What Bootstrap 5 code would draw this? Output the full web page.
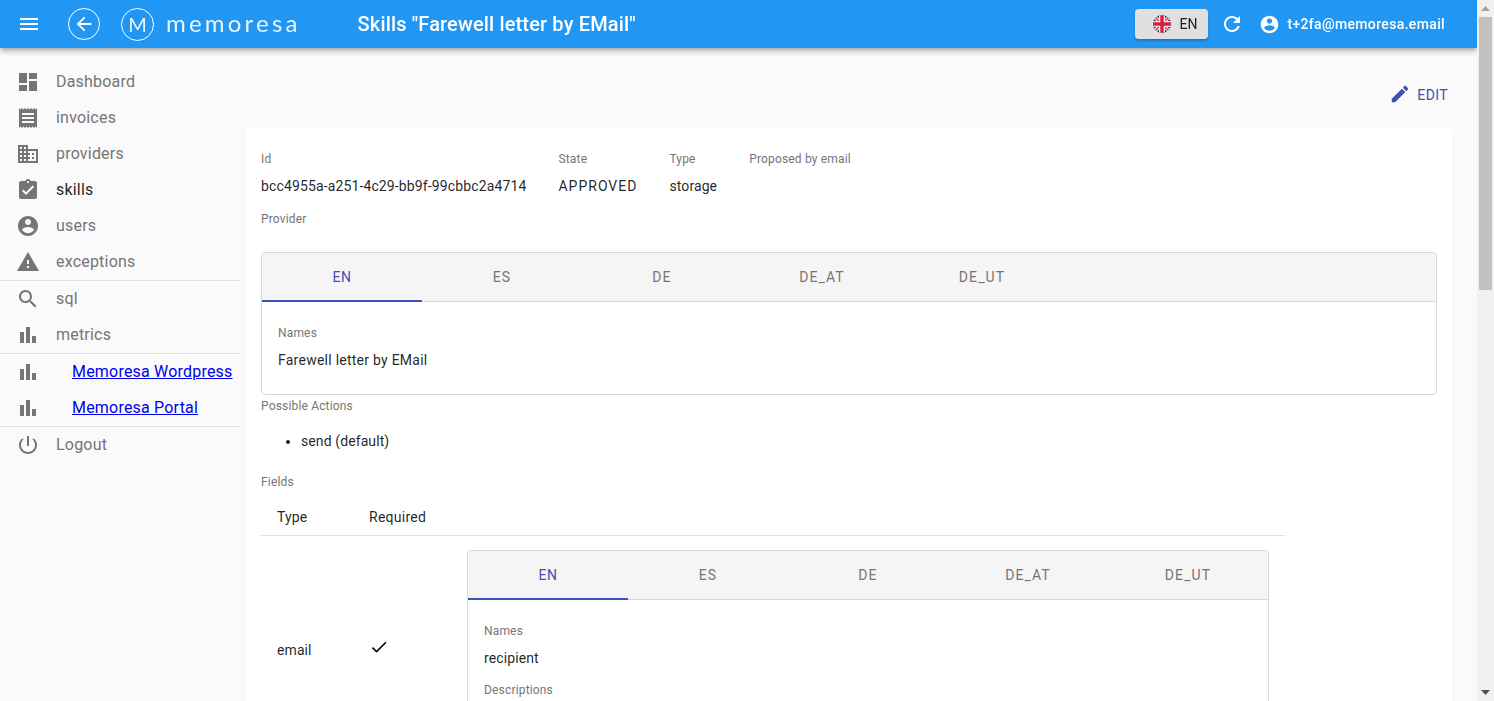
<!DOCTYPE html>
<html lang="en">
<head>
  <meta charset="UTF-8" />
  <meta name="viewport" content="width=device-width, initial-scale=1.0"/>
  <title>Memoresa Admin</title>
  <link href="https://cdn.jsdelivr.net/npm/bootstrap@5.3.0/dist/css/bootstrap.min.css" rel="stylesheet">
  <style>
    html, body { height: 100%; overflow: hidden; }
    body { background: #fafafa; font-family: Roboto, "Liberation Sans", sans-serif; font-size: 14px; color: rgba(0,0,0,.87); line-height: 20px; letter-spacing: .1px; }
    .ico { width: 24px; height: 24px; fill: currentColor; flex: none; }

    .app-pane { overflow-y: auto; scrollbar-width: none; height: 100%; }
    .fake-bar { width: 17px; height: 100%; background: #f1f1f1; flex: none; }
    .fake-bar .arrow { height: 17px; flex: none; }
    .fake-bar .slot { padding: 0 2px; }
    .fake-bar .thumb { height: 273px; background: #c1c1c1; }

    .top-bar { height: 48px; background: #2196f3; color: #fff; box-shadow: 0 2px 4px -1px rgba(0,0,0,.2), 0 4px 5px 0 rgba(0,0,0,.14), 0 1px 10px 0 rgba(0,0,0,.12); z-index: 10; padding: 0 16px; }
    .burger { margin-left: 1px; }
    .ring { border: 1.3px solid #fff; border-radius: 50%; flex: none; }
    .back-ring { width: 32px; height: 32px; margin-left: 27px; }
    .back-ring .ico { width: 22px; height: 22px; }
    .logo-ring { width: 33px; height: 33px; margin-left: 21px; font-family: Lato, sans-serif; font-weight: 400; font-size: 20px; line-height: 1; letter-spacing: 0; color: rgba(255,255,255,.9); }
    .logo-word { margin-left: 12px; font-family: Lato, sans-serif; font-weight: 400; font-size: 24px; letter-spacing: 3.2px; line-height: 1; margin-top: -3px; color: rgba(255,255,255,.9); }
    .page-title { margin: 0 0 0 57px; font-size: 20px; font-weight: 500; line-height: 28px; letter-spacing: .15px; }
    .lang-btn { width: 73px; height: 30px; background: #e0e0e0; border-radius: 4px; color: rgba(0,0,0,.87); box-shadow: 0 2px 2px rgba(0,0,0,.2); padding-left: 18px; gap: 8px; font-size: 14px; }
    .refresh { margin-left: 12px; }
    .user-ico { margin-left: 15px; width: 21px; height: 21px; }
    .user-mail { margin-left: 7px; margin-right: 16px; font-size: 14px; font-weight: 500; letter-spacing: .35px; }

    .side { width: 240px; flex: none; padding-top: 16px; font-size: 16px; letter-spacing: .2px; }
    .side-row { height: 36px; padding-left: 16px; color: #757575; text-decoration: none; }
    .side-row .ico { margin-right: 16px; color: #757575; }
    .side-row.now { color: rgba(0,0,0,.87); }
    .side-link { margin-left: 16px; color: #0000ee; text-decoration: underline; }
    .side-line { height: 1px; background: #e0e0e0; }

    .main-area { margin-left: 5px; margin-right: 24px; }
    .edit-btn { height: 36px; margin-top: 28px; margin-bottom: 16px; padding-right: 5px; color: #3f51b5; gap: 6px; letter-spacing: .4px; }
    .edit-btn .ico { width: 22px; height: 22px; }
    .edit-btn span { padding-top: 2px; }
    .sheet { background: #fff; border-radius: 4px; padding: 21px 16px; min-height: 900px; box-shadow: 0 1px 3px rgba(0,0,0,.06); }
    .cap { font-size: 12px; color: #757575; line-height: 20px; letter-spacing: .17px; }
    .val { line-height: 20px; margin-top: 7px; }
    .id-val { letter-spacing: .13px; }
    .wide { letter-spacing: .25px; }
    .caps { letter-spacing: 1px; }
    .facts { gap: 32px; margin-bottom: 13px; }

    .tab-box { border: 1px solid #d9d9d9; border-radius: 4px; }
    .tab-head { height: 49px; background: #f5f5f5; border-bottom: 1px solid #d9d9d9; border-radius: 4px 4px 0 0; }
    .tab-item { width: 160px; height: 48px; color: #757575; letter-spacing: 1.1px; }
    .tab-item.on { color: #3f51b5; border-bottom: 2px solid #3f51b5; margin-bottom: -1px; height: 49px; padding-top: 1px; letter-spacing: .6px; }
    .tab-body { padding: 21px 16px 24px; }
    .provider-box { margin-top: 23px; }
    .actions-cap { margin-top: 1px; }
    .act-list { margin: 15px 0 21px; padding-left: 40px; }
    .field-tbl { width: 1024px; margin: 0; border-collapse: collapse; }
    .field-tbl th { font-weight: 400; padding: 0 16px 8px; height: 43px; vertical-align: bottom; border-bottom: 1px solid #e0e0e0; }
    .field-tbl td { padding: 14px 16px; vertical-align: middle; border: 0; }
    .field-tbl .c1 { width: 92px; }
    .field-tbl .c2 { width: 98px; }
    .tick { width: 20px; height: 20px; display: block; margin-top: -6px; }
    .nested .desc-cap { margin-top: 12px; }
    .inner-foot { height: 26px; }
  </style>
</head>
<body class="d-flex">
  <svg class="d-none">
    <symbol id="i-menu" viewBox="0 0 24 24"><path d="M3 18h18v-2H3v2zm0-5h18v-2H3v2zm0-7v2h18V6H3z"/></symbol>
    <symbol id="i-back" viewBox="0 0 24 24"><path d="M20 11H7.83l5.59-5.59L12 4l-8 8 8 8 1.41-1.41L7.83 13H20v-2z"/></symbol>
    <symbol id="i-refresh" viewBox="0 0 24 24"><path d="M17.65 6.35C16.2 4.9 14.21 4 12 4c-4.42 0-7.99 3.58-7.99 8s3.57 8 7.99 8c3.73 0 6.84-2.55 7.73-6h-2.08c-.82 2.33-3.04 4-5.65 4-3.31 0-6-2.69-6-6s2.69-6 6-6c1.66 0 3.14.69 4.22 1.78L13 11h7V4l-2.35 2.35z"/></symbol>
    <symbol id="i-user" viewBox="0 0 24 24"><path d="M12 2C6.48 2 2 6.48 2 12s4.48 10 10 10 10-4.48 10-10S17.52 2 12 2zm0 3c1.66 0 3 1.34 3 3s-1.34 3-3 3-3-1.34-3-3 1.34-3 3-3zm0 14.2c-2.5 0-4.71-1.28-6-3.22.03-1.99 4-3.08 6-3.08 1.99 0 5.97 1.09 6 3.08-1.29 1.94-3.5 3.22-6 3.22z"/></symbol>
    <symbol id="i-dash" viewBox="0 0 24 24"><path d="M3 13h8V3H3v10zm0 8h8v-6H3v6zm10 0h8V11h-8v10zm0-18v6h8V3h-8z"/></symbol>
    <symbol id="i-receipt" viewBox="0 0 24 24"><path d="M18 17H6v-2h12v2zm0-4H6v-2h12v2zm0-4H6V7h12v2zM3 22l1.5-1.5L6 22l1.5-1.5L9 22l1.5-1.5L12 22l1.5-1.5L15 22l1.5-1.5L18 22l1.5-1.5L21 22V2l-1.5 1.5L18 2l-1.5 1.5L15 2l-1.5 1.5L12 2l-1.5 1.5L9 2 7.5 3.5 6 2 4.5 3.5 3 2v20z"/></symbol>
    <symbol id="i-domain" viewBox="0 0 24 24"><path d="M12 7V3H2v18h20V7H12zM6 19H4v-2h2v2zm0-4H4v-2h2v2zm0-4H4V9h2v2zm0-4H4V5h2v2zm4 12H8v-2h2v2zm0-4H8v-2h2v2zm0-4H8V9h2v2zm0-4H8V5h2v2zm10 12h-8v-2h2v-2h-2v-2h2v-2h-2V9h8v10zm-2-8h-2v2h2v-2zm0 4h-2v2h2v-2z"/></symbol>
    <symbol id="i-assign" viewBox="0 0 24 24"><path d="M19 3h-4.18C14.4 1.84 13.3 1 12 1c-1.3 0-2.4.84-2.82 2H5c-1.1 0-2 .9-2 2v14c0 1.1.9 2 2 2h14c1.1 0 2-.9 2-2V5c0-1.1-.9-2-2-2zm-7 0c.55 0 1 .45 1 1s-.45 1-1 1-1-.45-1-1 .45-1 1-1zm-2 14l-4-4 1.41-1.41L10 14.17l6.59-6.59L18 9l-8 8z"/></symbol>
    <symbol id="i-warn" viewBox="0 0 24 24"><path d="M1 21h22L12 2 1 21zm12-3h-2v-2h2v2zm0-4h-2v-4h2v4z"/></symbol>
    <symbol id="i-search" viewBox="0 0 24 24"><path d="M15.5 14h-.79l-.28-.27C15.41 12.59 16 11.11 16 9.5 16 5.91 13.09 3 9.5 3S3 5.91 3 9.5 5.91 16 9.5 16c1.61 0 3.09-.59 4.23-1.57l.27.28v.79l5 4.99L20.49 19l-4.99-5zm-6 0C7.01 14 5 11.99 5 9.5S7.01 5 9.5 5 14 7.01 14 9.5 11.99 14 9.5 14z"/></symbol>
    <symbol id="i-bars" viewBox="0 0 24 24"><path d="M4 9h4v11H4zM10 4h4v16h-4zM16 13h4v7h-4z"/></symbol>
    <symbol id="i-power" viewBox="0 0 24 24"><path d="M13 3h-2v10h2V3zm4.83 2.17l-1.42 1.42C17.99 7.86 19 9.81 19 12c0 3.87-3.13 7-7 7s-7-3.13-7-7c0-2.19 1.01-4.14 2.58-5.42L6.17 5.17C4.23 6.82 3 9.26 3 12c0 4.97 4.03 9 9 9s9-4.03 9-9c0-2.74-1.23-5.18-3.17-6.83z"/></symbol>
    <symbol id="i-edit" viewBox="0 0 24 24"><path d="M3 17.25V21h3.75L17.81 9.94l-3.75-3.75L3 17.25zM20.71 7.04c.39-.39.39-1.02 0-1.41l-2.34-2.34c-.39-.39-1.02-.39-1.41 0l-1.83 1.83 3.75 3.75 1.83-1.83z"/></symbol>
    <symbol id="i-check" viewBox="0 0 24 24"><path d="M9 16.17L4.83 12l-1.42 1.41L9 19 21 7l-1.41-1.41z"/></symbol>
  </svg>

  <div class="app-pane flex-grow-1">
    <header class="top-bar sticky-top d-flex align-items-center">
      <svg class="ico burger"><use href="#i-menu"/></svg>
      <div class="ring back-ring d-flex align-items-center justify-content-center"><svg class="ico"><use href="#i-back"/></svg></div>
      <div class="ring logo-ring d-flex align-items-center justify-content-center">M</div>
      <div class="logo-word">memoresa</div>
      <h1 class="page-title">Skills "Farewell letter by EMail"</h1>
      <div class="lang-btn d-flex align-items-center ms-auto">
        <svg width="18" height="18" viewBox="0 0 18 18">
          <clipPath id="flagclip"><circle cx="9" cy="9" r="9"/></clipPath>
          <g clip-path="url(#flagclip)">
            <rect width="18" height="18" fill="#1d3c8f"/>
            <path d="M0 0L18 18M18 0L0 18" stroke="#f0dfe2" stroke-width="3.4"/>
            <path d="M0 0L18 18M18 0L0 18" stroke="#d8203c" stroke-width="1.1"/>
            <path d="M9 0V18M0 9H18" stroke="#f3e6e8" stroke-width="6"/>
            <path d="M9 0V18M0 9H18" stroke="#d8203c" stroke-width="3.4"/>
          </g>
        </svg>
        <span>EN</span>
      </div>
      <svg class="ico refresh"><use href="#i-refresh"/></svg>
      <svg class="ico user-ico"><use href="#i-user"/></svg>
      <span class="user-mail">t+2fa@memoresa.email</span>
    </header>

    <div class="d-flex">
      <nav class="side">
        <a class="side-row d-flex align-items-center" href="#"><svg class="ico"><use href="#i-dash"/></svg>Dashboard</a>
        <a class="side-row d-flex align-items-center" href="#"><svg class="ico"><use href="#i-receipt"/></svg>invoices</a>
        <a class="side-row d-flex align-items-center" href="#"><svg class="ico"><use href="#i-domain"/></svg>providers</a>
        <a class="side-row now d-flex align-items-center" href="#"><svg class="ico"><use href="#i-assign"/></svg>skills</a>
        <a class="side-row d-flex align-items-center" href="#"><svg class="ico"><use href="#i-user"/></svg>users</a>
        <a class="side-row d-flex align-items-center" href="#"><svg class="ico"><use href="#i-warn"/></svg>exceptions</a>
        <div class="side-line"></div>
        <a class="side-row d-flex align-items-center" href="#"><svg class="ico"><use href="#i-search"/></svg>sql</a>
        <a class="side-row d-flex align-items-center" href="#"><svg class="ico"><use href="#i-bars"/></svg>metrics</a>
        <div class="side-line"></div>
        <div class="side-row d-flex align-items-center"><svg class="ico"><use href="#i-bars"/></svg><a class="side-link" href="#">Memoresa Wordpress</a></div>
        <div class="side-row d-flex align-items-center"><svg class="ico"><use href="#i-bars"/></svg><a class="side-link" href="#">Memoresa Portal</a></div>
        <div class="side-line"></div>
        <a class="side-row d-flex align-items-center" href="#"><svg class="ico"><use href="#i-power"/></svg>Logout</a>
      </nav>

      <main class="main-area flex-grow-1">
        <div class="d-flex justify-content-end">
          <div class="edit-btn d-flex align-items-center"><svg class="ico"><use href="#i-edit"/></svg><span>EDIT</span></div>
        </div>
        <section class="sheet">
          <div class="d-flex facts">
            <div><div class="cap">Id</div><div class="val id-val">bcc4955a-a251-4c29-bb9f-99cbbc2a4714</div></div>
            <div><div class="cap">State</div><div class="val caps">APPROVED</div></div>
            <div><div class="cap">Type</div><div class="val">storage</div></div>
            <div><div class="cap">Proposed by email</div></div>
          </div>
          <div class="cap">Provider</div>

          <div class="tab-box provider-box">
            <div class="tab-head d-flex">
              <div class="tab-item on d-flex align-items-center justify-content-center">EN</div>
              <div class="tab-item d-flex align-items-center justify-content-center">ES</div>
              <div class="tab-item d-flex align-items-center justify-content-center">DE</div>
              <div class="tab-item d-flex align-items-center justify-content-center">DE_AT</div>
              <div class="tab-item d-flex align-items-center justify-content-center">DE_UT</div>
            </div>
            <div class="tab-body">
              <div class="cap">Names</div>
              <div class="val wide">Farewell letter by EMail</div>
            </div>
          </div>

          <div class="cap actions-cap">Possible Actions</div>
          <ul class="act-list">
            <li>send (default)</li>
          </ul>
          <div class="cap">Fields</div>

          <table class="field-tbl">
            <thead>
              <tr><th class="c1">Type</th><th class="c2 wide">Required</th><th></th></tr>
            </thead>
            <tbody>
              <tr>
                <td>email</td>
                <td><svg class="tick"><use href="#i-check"/></svg></td>
                <td>
                  <div class="tab-box nested">
                    <div class="tab-head d-flex">
                      <div class="tab-item on d-flex align-items-center justify-content-center">EN</div>
                      <div class="tab-item d-flex align-items-center justify-content-center">ES</div>
                      <div class="tab-item d-flex align-items-center justify-content-center">DE</div>
                      <div class="tab-item d-flex align-items-center justify-content-center">DE_AT</div>
                      <div class="tab-item d-flex align-items-center justify-content-center">DE_UT</div>
                    </div>
                    <div class="tab-body">
                      <div class="cap">Names</div>
                      <div class="val">recipient</div>
                      <div class="cap desc-cap">Descriptions</div>
                      <div class="inner-foot"></div>
                    </div>
                  </div>
                </td>
              </tr>
            </tbody>
          </table>
        </section>
      </main>
    </div>
  </div>

  <div class="fake-bar d-flex flex-column">
    <div class="arrow d-flex align-items-center justify-content-center"><svg width="9" height="5"><path d="M4.5 0L9 5H0z" fill="#a3a3a3"/></svg></div>
    <div class="slot flex-grow-1"><div class="thumb"></div></div>
    <div class="arrow d-flex align-items-center justify-content-center"><svg width="9" height="5"><path d="M0 0H9L4.5 5z" fill="#505050"/></svg></div>
  </div>

  <script src="https://cdn.jsdelivr.net/npm/bootstrap@5.3.0/dist/js/bootstrap.bundle.min.js"></script>
</body>
</html>
